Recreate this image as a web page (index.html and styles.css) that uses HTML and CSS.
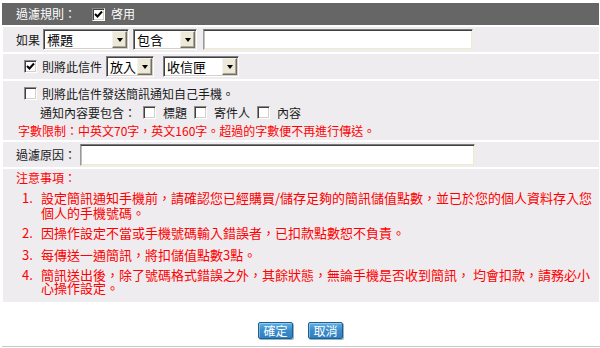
FILE: index.html
```html
<!DOCTYPE html>
<html lang="zh-Hant">
<head>
<meta charset="utf-8">
<title>過濾規則</title>
<link rel="stylesheet" href="styles.css">
</head>
<body>
<div class="panel">
  <div class="row head">
    <span class="label">過濾規則：</span>
    <span class="cb on"><svg viewBox="0 0 9 9" width="9" height="9"><path d="M1 4 L3.5 6.5 L8 1.5" fill="none" stroke="#000" stroke-width="2"/></svg></span>
    <span class="cb-text">啓用</span>
  </div>

  <div class="row r-if">
    <span class="label">如果</span>
    <span class="sel w-field"><span class="val">標題</span><span class="arrow"><i></i></span></span>
    <span class="sel w-op"><span class="val">包含</span><span class="arrow"><i></i></span></span>
    <span class="txt w-kw"></span>
  </div>

  <div class="row r-move">
    <span class="cb on"><svg viewBox="0 0 9 9" width="9" height="9"><path d="M1 4 L3.5 6.5 L8 1.5" fill="none" stroke="#000" stroke-width="2"/></svg></span>
    <span class="label move-label">則將此信件</span>
    <span class="sel w-act"><span class="val">放入</span><span class="arrow"><i></i></span></span>
    <span class="sel w-box"><span class="val">收信匣</span><span class="arrow"><i></i></span></span>
  </div>

  <div class="row r-sms">
    <div class="line l1">
      <span class="cb"></span>
      <span class="label">則將此信件發送簡訊通知自己手機。</span>
    </div>
    <div class="line l2">
      <span class="label">通知內容要包含：</span>
      <span class="cb"></span><span class="opt">標題</span>
      <span class="cb"></span><span class="opt">寄件人</span>
      <span class="cb"></span><span class="opt">內容</span>
    </div>
    <div class="line l3 red">字數限制：中英文70字，英文160字。超過的字數便不再進行傳送。</div>
  </div>

  <div class="row r-reason">
    <span class="label">過濾原因：</span>
    <span class="txt w-reason"></span>
  </div>

  <div class="row r-notes red">
    <div class="notes-title">注意事項：</div>
    <ol class="notes">
      <li class="n1"><span class="num">1.</span><span class="body">設定簡訊通知手機前，請確認您已經購買/儲存足夠的簡訊儲值點數，並已於您的個人資料存入您個人的手機號碼。</span></li>
      <li class="n2"><span class="num">2.</span><span class="body">因操作設定不當或手機號碼輸入錯誤者，已扣款點數恕不負責。</span></li>
      <li class="n3"><span class="num">3.</span><span class="body">每傳送一通簡訊，將扣儲值點數3點。</span></li>
      <li class="n4"><span class="num">4.</span><span class="body">簡訊送出後，除了號碼格式錯誤之外，其餘狀態，無論手機是否收到簡訊， 均會扣款，請務必小心操作設定。</span></li>
    </ol>
  </div>
</div>

<div class="actions">
  <button class="btn" type="button">確定</button>
  <button class="btn" type="button">取消</button>
</div>
<div class="rule"></div>
</body>
</html>
```

FILE: styles.css
```css
html, body {
  margin: 0;
  padding: 0;
  background: #fff;
}
body {
  width: 600px;
  height: 348px;
  overflow: hidden;
  font-family: "Noto Sans CJK TC", "Liberation Sans", sans-serif;
  font-size: 12px;
  color: #1a1a1a;
}

.panel {
  margin: 3px 1px 0 2px;
  display: flex;
  flex-direction: column;
  gap: 2px;
}

.row {
  background: #eeecef;
  display: flex;
  align-items: center;
  box-sizing: border-box;
  margin-left: 1px;
}

.label {
  white-space: nowrap;
  line-height: 14px;
}

/* header */
.head {
  background: #666;
  height: 22px;
  margin-left: 0;
  padding-left: 14px;
  color: #fff;
}
.head .cb {
  margin-left: 16px;
}
.cb-text {
  margin-left: 6px;
  line-height: 14px;
}

/* checkbox */
.cb {
  display: inline-flex;
  align-items: center;
  justify-content: center;
  width: 13px;
  height: 13px;
  box-sizing: border-box;
  background: #fff;
  border: 1px solid;
  border-color: #8c8c8c #fff #fff #8c8c8c;
  box-shadow: inset 1px 1px 0 #404040, inset -1px -1px 0 #d4d0c8;
  flex: none;
}
.cb svg {
  display: block;
}

/* select look */
.sel {
  display: inline-flex;
  align-items: stretch;
  height: 21px;
  box-sizing: border-box;
  background: #fff;
  border: 1px solid;
  border-color: #808080 #fff #fff #808080;
  box-shadow: inset 1px 1px 0 #404040, inset -1px -1px 0 #d4d0c8;
  padding: 1px;
  flex: none;
}
.sel .val {
  flex: 1;
  min-width: 0;
  display: flex;
  align-items: center;
  white-space: nowrap;
  font-size: 13px;
  line-height: 17px;
  padding-left: 2px;
  color: #000;
}
.sel .arrow {
  width: 15px;
  flex: none;
  box-sizing: border-box;
  background: #ece9d8;
  border: 1px solid;
  border-color: #f4f3ee #716f64 #716f64 #f4f3ee;
  box-shadow: inset -1px -1px 0 #aca899;
  display: flex;
  align-items: center;
  justify-content: center;
}
.sel .arrow i {
  width: 0;
  height: 0;
  border-left: 3.5px solid transparent;
  border-right: 3.5px solid transparent;
  border-top: 4px solid #000;
  margin-top: 1px;
}

/* text input look */
.txt {
  display: inline-block;
  box-sizing: border-box;
  background: #fff;
  border: 1px solid;
  border-color: #7a7a7a #f1efe2 #f1efe2 #9a9a9a;
  box-shadow: inset 0 1px 0 #404040, inset 1px 0 0 #c0c0c0, inset -1px -1px 0 #ece9d8;
  flex: none;
}

/* row 1 */
.r-if {
  height: 25px;
  padding-left: 13px;
}
.r-if .label { margin-right: 3px; }
.w-field { width: 86px; }
.w-op { width: 64px; margin-left: 4px; }
.w-kw { width: 270px; height: 21px; margin-left: 6px; }

/* row 2 */
.r-move {
  height: 25px;
  padding-left: 21px;
}
.move-label { margin-left: 5px; margin-right: 4px; }
.w-act { width: 48px; }
.w-box { width: 76px; margin-left: 9px; }

/* row 3 */
.r-sms {
  height: 59px;
  flex-direction: column;
  align-items: stretch;
  padding-top: 3px;
}
.line {
  display: flex;
  align-items: center;
  height: 19px;
}
.l1 { padding-left: 21px; }
.l1 .label { margin-left: 5px; }
.l2 { padding-left: 37px; }
.l2 .label { margin-right: 7px; }
.l2 .opt { margin: 0 7px 0 7px; line-height: 14px; }
.l3 { padding-left: 15px; height: 18px; line-height: 14px; }

.red { color: #f00; }

/* row 4 */
.r-reason {
  height: 25px;
  padding-left: 13px;
}
.r-reason .label { margin-right: 4px; }
.w-reason { width: 395px; height: 22px; }

/* notes */
.r-notes {
  height: 133px;
  flex-direction: column;
  align-items: stretch;
  padding-left: 13px;
}
.notes-title {
  height: 18px;
  line-height: 18px;
}
.notes {
  list-style: none;
  margin: 0;
  padding: 0;
  font-size: 13px;
}
.notes li {
  display: flex;
  line-height: 15px;
}
.notes .num {
  width: 19px;
  padding-left: 6px;
  flex: none;
}
.notes .body {
  width: 552px;
  flex: none;
}
.n1 { margin-top: 3px; }
.n2 { margin-top: 5px; }
.n3 { margin-top: 7px; }
.n4 { margin-top: 6px; }
.n4 .body, .n4 .num { line-height: 13px; }

/* buttons */
.actions {
  display: flex;
  justify-content: center;
  gap: 15px;
  margin-top: 20px;
  padding-left: 1px;
  height: 17px;
}
.btn {
  width: 35px;
  height: 17px;
  padding: 0;
  margin: 0;
  box-sizing: border-box;
  border: 1px solid #1f5f8e;
  border-radius: 2px;
  background: linear-gradient(#5fb0e3, #3a8ccb 50%, #2f7fbf);
  box-shadow: inset 1px 1px 0 rgba(255,255,255,0.35), 1px 1px 0 #9bb3c6;
  color: #fff;
  font-family: "Noto Sans CJK TC", "Liberation Sans", sans-serif;
  font-size: 12px;
  line-height: 14px;
  cursor: pointer;
}

.rule {
  margin: 7px 0 0 2px;
  height: 1px;
  background: #c8c8c8;
}
```
